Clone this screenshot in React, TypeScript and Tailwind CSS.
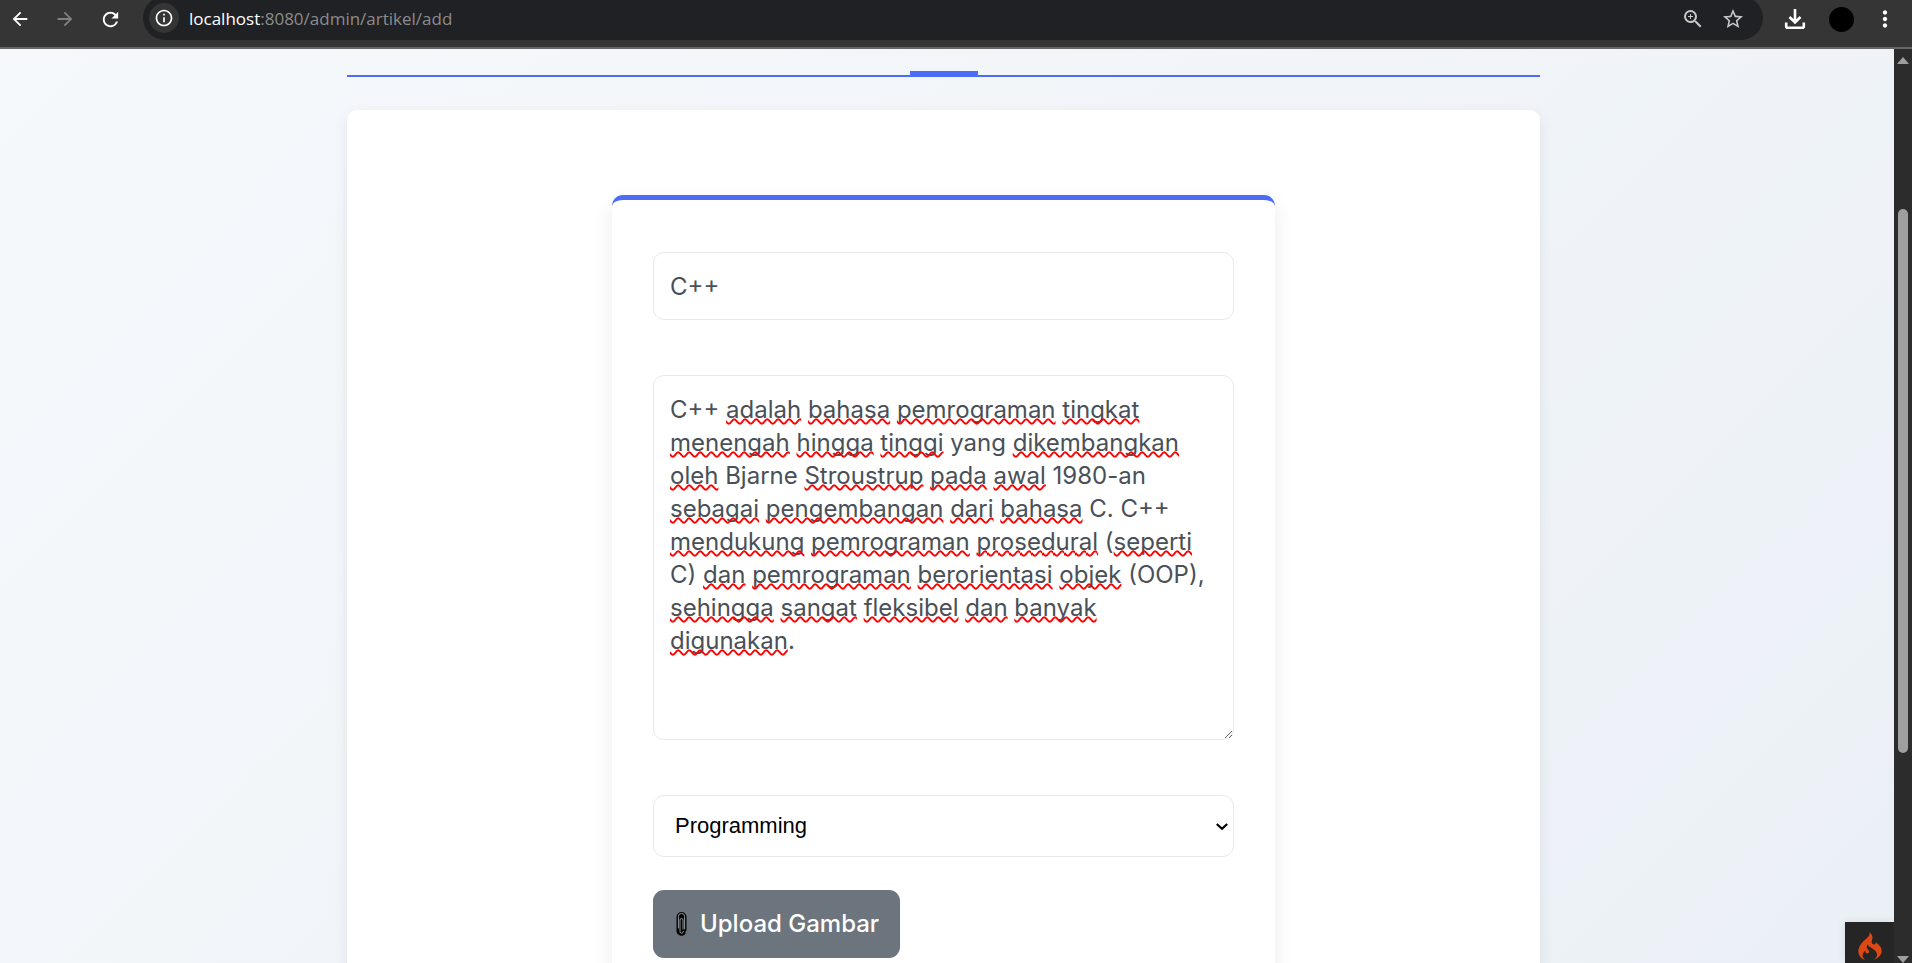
import { useState } from "react";
import {
  MdArrowBack,
  MdArrowForward,
  MdInfoOutline,
  MdMoreVert,
  MdRefresh,
  MdStarBorder,
  MdZoomIn,
} from "react-icons/md";
import { SiCodeigniter } from "react-icons/si";

const ARTICLE =
  "C++ adalah bahasa pemrograman tingkat menengah hingga tinggi yang dikembangkan oleh Bjarne Stroustrup pada awal 1980-an sebagai pengembangan dari bahasa C. C++ mendukung pemrograman prosedural (seperti C) dan pemrograman berorientasi objek (OOP), sehingga sangat fleksibel dan banyak digunakan.";

const KNOWN_WORDS = new Set(["C", "Bjarne", "yang", "an", "OOP"]);

/* Wavy underlines below every word the dictionary does not know. */
function SpellingMarks({ text }: { text: string }) {
  return (
    <div
      aria-hidden="true"
      className="pointer-events-none col-start-1 row-start-1 overflow-hidden border border-transparent px-4 py-[17px] text-2xl leading-[33px] break-words whitespace-pre-wrap text-transparent"
    >
      {text.split(/([A-Za-z]+)/).map((part, i) =>
        /^[A-Za-z]+$/.test(part) && !KNOWN_WORDS.has(part) ? (
          <span
            key={i}
            className="underline decoration-[#ff0000] decoration-wavy decoration-2 underline-offset-0 [text-decoration-skip-ink:none]"
          >
            {part}
          </span>
        ) : (
          part
        ),
      )}
    </div>
  );
}

function DownloadIcon() {
  return (
    <svg width="22" height="22" viewBox="0 0 22 22" fill="none" stroke="white" strokeWidth="2.6">
      <path d="M11 1v13M5.5 9l5.5 5.5L16.500 9" />
      <path d="M2.200 14.500V18.200a1.500 1.500 0 0 0 1.500 1.500h14.600a1.500 1.500 0 0 0 1.500-1.500V14.500" />
    </svg>
  );
}

function PaperclipIcon() {
  return (
    <svg width="12" height="26" viewBox="0 0 12 26" fill="none" strokeLinecap="round">
      <path d="M5.500 4.500v16M2.500 6a3 3 0 0 1 6 0v13M2.500 6v14.500a3 3 0 0 0 5 1.500" stroke="black" strokeWidth="4" />
      <path
        d="M7 18V9a1.500 1.500 0 0 0-3 0v11.500a1.700 1.700 0 0 0 3.400 0M2.400 17V5.500a3.100 3.100 0 0 1 6.200 0V18"
        stroke="#a3a9ae"
        strokeWidth="0.900"
      />
    </svg>
  );
}

function Toolbar() {
  return (
    <header className="flex h-[49px] shrink-0 items-start border-b-2 border-[#666] bg-[#353535] text-white">
      <nav className="flex h-[38px] items-center gap-[23px] pl-[9px]">
        <button type="button" aria-label="Back">
          <MdArrowBack size={22} />
        </button>
        <button type="button" aria-label="Forward" className="text-[#808080]">
          <MdArrowForward size={22} />
        </button>
        <button type="button" aria-label="Reload">
          <MdRefresh size={23} />
        </button>
      </nav>
      <div className="-mt-1 ml-[21px] flex h-11 min-w-0 flex-1 items-center rounded-full bg-[#202124] pr-[18px] pl-1.5">
        <button
          type="button"
          aria-label="Site information"
          className="flex size-[30px] shrink-0 items-center justify-center rounded-full bg-[#353535]"
        >
          <MdInfoOutline size={20} />
        </button>
        <a
          href="#url"
          className="ml-2.5 flex-1 truncate pt-0.5 font-['Open_Sans',sans-serif] text-[17px] leading-6 text-[#8c8c8c]"
        >
          <span className="text-white">localhost</span>:8080/admin/artikel/add
        </a>
        <div className="flex items-center gap-4 pt-0.5 text-[#c7c7c7]">
          <button type="button" aria-label="Zoom">
            <MdZoomIn size={24} />
          </button>
          <button type="button" aria-label="Bookmark">
            <MdStarBorder size={24} />
          </button>
        </div>
      </div>
      <div className="flex h-[38px] items-center pr-[14px] pl-[21px]">
        <button type="button" aria-label="Downloads">
          <DownloadIcon />
        </button>
        <button type="button" aria-label="Profile" className="ml-[23px] size-[25px] rounded-full bg-black" />
        <button type="button" aria-label="Menu" className="ml-[18px]">
          <MdMoreVert size={26} />
        </button>
      </div>
    </header>
  );
}

function Scrollbar() {
  return (
    <div className="flex w-[18px] shrink-0 flex-col items-center bg-[#2c2c2c] pt-2">
      <svg width="12" height="7" viewBox="0 0 12 7" fill="#9f9f9f">
        <path d="M6 0l6 7H0z" />
      </svg>
      <div className="flex min-h-0 w-full flex-1 flex-col items-center">
        <div className="grow-[145]" />
        <div className="w-2.5 grow-[544] rounded-full bg-[#9f9f9f]" />
        <div className="grow-[203]" />
      </div>
      <svg width="12" height="7" viewBox="0 0 12 7" fill="#9f9f9f">
        <path d="M0 0h12L6 7z" />
      </svg>
    </div>
  );
}

export default function App() {
  const [title, setTitle] = useState("C++");
  const [body, setBody] = useState(ARTICLE);

  return (
    <div className="flex h-screen flex-col font-[Inter,sans-serif]">
      <Toolbar />
      <div className="flex min-h-0 flex-1">
        <main className="relative min-w-0 flex-1 overflow-hidden bg-linear-135 from-[#f5f9fc] via-[#f1f5f9] to-[#ebf0f6] pr-[7px]">
          <div className="mx-auto w-full max-w-[1193px]">
            <div className="flex h-7 items-end justify-center border-b-2 border-[#4a6cf7]">
              <div className="h-1 w-[68px] bg-[#4a6cf7]" />
            </div>
            <section className="mt-[33px] rounded-[10px] bg-white px-6 pt-[85px] pb-20 shadow-[0_5px_15px_rgba(0,0,0,0.08)]">
              <form
                onSubmit={(e) => e.preventDefault()}
                className="mx-auto max-w-[663px] rounded-[11px] border-t-5 border-[#4a6cf7] bg-white px-[41px] pt-[52px] pb-12 shadow-[0_7px_20px_rgba(0,0,0,0.08)]"
              >
                <input
                  type="text"
                  aria-label="Judul"
                  value={title}
                  onChange={(e) => setTitle(e.target.value)}
                  className="block h-[68px] w-full rounded-[11px] border border-[#e8e9ea] px-4 text-2xl text-[#495057] outline-none"
                />
                <div className="mt-[55px] grid">
                  <textarea
                    aria-label="Isi artikel"
                    spellCheck={false}
                    value={body}
                    onChange={(e) => setBody(e.target.value)}
                    className="col-start-1 row-start-1 block h-[365px] w-full resize-y rounded-[11px] border border-[#e8e9ea] px-4 py-[17px] text-2xl leading-[33px] text-[#495057] outline-none"
                  />
                  <SpellingMarks text={body} />
                </div>
                <div className="mt-[55px] grid items-center">
                  <select
                    aria-label="Kategori"
                    defaultValue="Programming"
                    className="col-start-1 row-start-1 block h-[62px] w-full appearance-none rounded-[11px] border border-[#e8e9ea] bg-white px-[21px] pb-0.5 font-['Liberation_Sans',Arial,sans-serif] text-[22px] text-black outline-none"
                  >
                    <option>Programming</option>
                  </select>
                  <svg
                    width="12"
                    height="8"
                    viewBox="0 0 12 8"
                    fill="none"
                    stroke="black"
                    strokeWidth="2.2"
                    className="pointer-events-none col-start-1 row-start-1 mr-1.5 justify-self-end"
                  >
                    <path d="M.8 2L6 6.800l5.200-4.800" />
                  </svg>
                </div>
                <button
                  type="button"
                  className="mt-[33px] flex h-[68px] items-center gap-3 rounded-[11px] bg-[#6c757d] px-[23px] text-2xl font-medium text-white"
                >
                  <PaperclipIcon />
                  <span className="w-[177px] text-left whitespace-nowrap">Upload Gambar</span>
                </button>
              </form>
            </section>
          </div>
          <a
            href="#debug"
            aria-label="Debug toolbar"
            className="absolute right-0 bottom-0 flex h-[41px] w-[49px] justify-center bg-[#252525] pt-[10px] text-[#dd4814] shadow-[0_0_8px_rgba(0,0,0,0.1)]"
          >
            <SiCodeigniter size={28} />
          </a>
        </main>
        <Scrollbar />
      </div>
    </div>
  );
}
